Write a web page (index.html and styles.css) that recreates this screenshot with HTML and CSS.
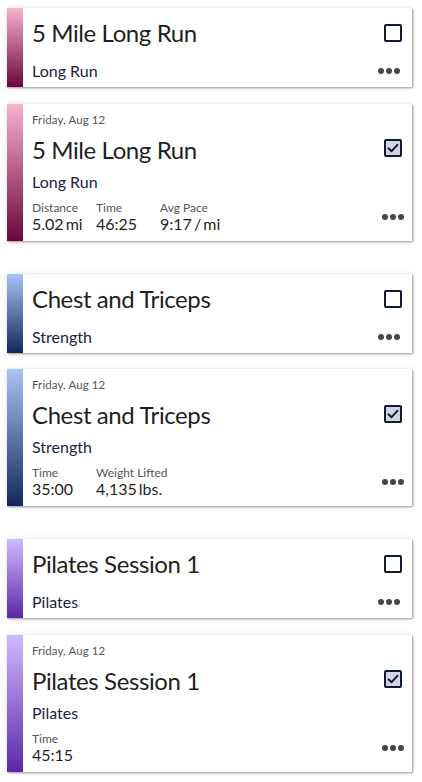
FILE: index.html
```html
<!DOCTYPE html>
<html lang="en">
<head>
<meta charset="utf-8">
<title>Workouts</title>
<link rel="stylesheet" href="styles.css">
</head>
<body>
<main class="list">
  <section class="group">
    <article class="card run">
      <div class="stripe"></div>
      <div class="body">
        <div class="head"><h2 class="title">5 Mile Long Run</h2><span class="check"></span></div>
        <div class="foot"><span class="type">Long Run</span><span class="dots"><i></i><i></i><i></i></span></div>
      </div>
    </article>
    <article class="card run done">
      <div class="stripe"></div>
      <div class="body">
        <div class="date">Friday, Aug 12</div>
        <div class="head"><h2 class="title">5 Mile Long Run</h2><span class="check"><svg viewBox="0 0 14 14" width="14" height="14"><path d="M2.6 7.4 L5.6 10.2 L11.4 3.8" fill="none" stroke="#0f1a33" stroke-width="2" stroke-linecap="round" stroke-linejoin="round"/></svg></span></div>
        <div class="type">Long Run</div>
        <div class="foot">
          <div class="stats">
            <div class="stat"><span class="label">Distance</span><span class="value">5.02 mi</span></div>
            <div class="stat"><span class="label">Time</span><span class="value">46:25</span></div>
            <div class="stat"><span class="label">Avg Pace</span><span class="value">9:17 / mi</span></div>
          </div>
          <span class="dots"><i></i><i></i><i></i></span>
        </div>
      </div>
    </article>
  </section>
  <section class="group">
    <article class="card strength">
      <div class="stripe"></div>
      <div class="body">
        <div class="head"><h2 class="title">Chest and Triceps</h2><span class="check"></span></div>
        <div class="foot"><span class="type">Strength</span><span class="dots"><i></i><i></i><i></i></span></div>
      </div>
    </article>
    <article class="card strength done">
      <div class="stripe"></div>
      <div class="body">
        <div class="date">Friday, Aug 12</div>
        <div class="head"><h2 class="title">Chest and Triceps</h2><span class="check"><svg viewBox="0 0 14 14" width="14" height="14"><path d="M2.6 7.4 L5.6 10.2 L11.4 3.8" fill="none" stroke="#0f1a33" stroke-width="2" stroke-linecap="round" stroke-linejoin="round"/></svg></span></div>
        <div class="type">Strength</div>
        <div class="foot">
          <div class="stats">
            <div class="stat"><span class="label">Time</span><span class="value">35:00</span></div>
            <div class="stat"><span class="label">Weight Lifted</span><span class="value">4,135 lbs.</span></div>
          </div>
          <span class="dots"><i></i><i></i><i></i></span>
        </div>
      </div>
    </article>
  </section>
  <section class="group">
    <article class="card pilates">
      <div class="stripe"></div>
      <div class="body">
        <div class="head"><h2 class="title">Pilates Session 1</h2><span class="check"></span></div>
        <div class="foot"><span class="type">Pilates</span><span class="dots"><i></i><i></i><i></i></span></div>
      </div>
    </article>
    <article class="card pilates done">
      <div class="stripe"></div>
      <div class="body">
        <div class="date">Friday, Aug 12</div>
        <div class="head"><h2 class="title">Pilates Session 1</h2><span class="check"><svg viewBox="0 0 14 14" width="14" height="14"><path d="M2.6 7.4 L5.6 10.2 L11.4 3.8" fill="none" stroke="#0f1a33" stroke-width="2" stroke-linecap="round" stroke-linejoin="round"/></svg></span></div>
        <div class="type">Pilates</div>
        <div class="foot">
          <div class="stats">
            <div class="stat"><span class="label">Time</span><span class="value">45:15</span></div>
          </div>
          <span class="dots"><i></i><i></i><i></i></span>
        </div>
      </div>
    </article>
  </section>
</main>
</body>
</html>
```

FILE: styles.css
```css
* { box-sizing: border-box; }
html, body { margin: 0; padding: 0; background: #ffffff; }
body {
  font-family: Lato, "Noto Sans", sans-serif;
  color: #1e1e1e;
}
.list {
  display: flex;
  flex-direction: column;
  gap: 33px;
  padding: 8px 10px 8px 7px;
}
.group {
  display: flex;
  flex-direction: column;
  gap: 16.5px;
}
.card {
  display: flex;
  height: 79px;
  background: #fff;
  box-shadow: 1px 1px 2px rgba(0,0,0,0.38), 0 0 7px rgba(0,0,0,0.09);
}
.card.done { height: 137px; }
.stripe { width: 16px; flex: none; }
.run .stripe { background: linear-gradient(#f7b2ce, #6a073a); }
.strength .stripe { background: linear-gradient(#aac3f4, #12285a); }
.pilates .stripe { background: linear-gradient(#d0bbfc, #5a28a8); }
.body {
  flex: 1;
  display: flex;
  flex-direction: column;
  padding: 8px 10px 6px 9px;
}
.done .body { padding-bottom: 8px; }
.date {
  height: 16px;
  line-height: 16px;
  font-size: 11.5px;
  letter-spacing: 0.1px;
  color: #57535a;
  margin-bottom: 5px;
}
.head {
  display: flex;
  align-items: center;
  justify-content: space-between;
  height: 34px;
}
.title {
  margin: 0;
  font-size: 24px;
  font-weight: 400;
  line-height: 34px;
  letter-spacing: -0.4px;
  color: #1f1f1f;
}
.check {
  width: 18px;
  height: 18px;
  border: 2px solid #0f1a33;
  border-radius: 2px;
  display: flex;
  align-items: center;
  justify-content: center;
}
.done .check { background: #d2d5de; margin-top: -3px; }
.check svg { display: block; }
.type {
  font-size: 16px;
  line-height: 20px;
  color: #1a2442;
}
.done .type { margin-top: 5px; height: 20px; }
.foot {
  display: flex;
  align-items: center;
  justify-content: space-between;
  height: 20px;
  margin-top: 11px;
}
.done .foot { height: 32px; margin-top: 9px; }
.stats { display: flex; }
.stat {
  display: flex;
  flex-direction: column;
  min-width: 64px;
  padding-right: 10px;
}
.label {
  font-size: 12px;
  line-height: 14px;
  color: #57535a;
}
.value {
  font-size: 16px;
  line-height: 18px;
  word-spacing: -2px;
  color: #1f1f1f;
}
.dots {
  display: flex;
  gap: 2px;
  margin-right: 2px;
}
.done .dots { margin-right: -2px; }
.dots i {
  width: 6px;
  height: 6px;
  border-radius: 50%;
  background: #4a4349;
}
```
